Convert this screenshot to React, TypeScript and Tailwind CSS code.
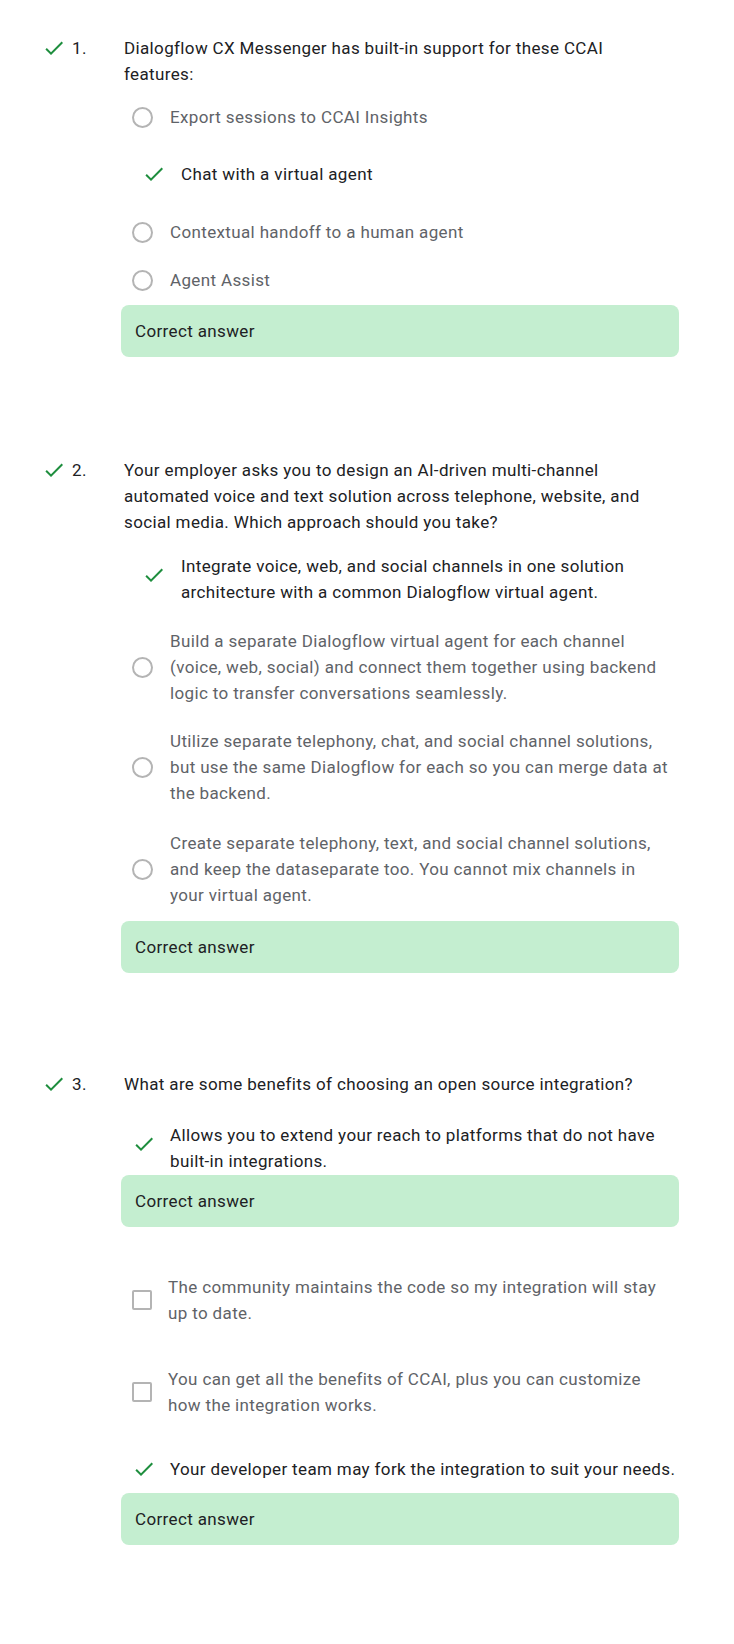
import React from "react";

type Kind = "radio" | "checkbox" | "picked" | "pickedTight";

type Option = {
  lines: string[];
  kind: Kind;
  mt: string;
  // green "Correct answer" box shown right after this option
  box?: string;
};

type Question = {
  num: number;
  mt: string;
  lines: string[];
  options: Option[];
  box?: string;
};

const CHECK_PATH = "M9 16.17L4.83 12l-1.42 1.41L9 19 21 7l-1.41-1.41z";

function CheckIcon({ className }: { className?: string }) {
  return (
    <svg viewBox="0 0 24 24" className={className} fill="#1e8e3e" aria-hidden="true">
      <path d={CHECK_PATH} />
    </svg>
  );
}

const questions: Question[] = [
  {
    num: 1,
    mt: "mt-0",
    lines: ["Dialogflow CX Messenger has built-in support for these CCAI", "features:"],
    options: [
      { lines: ["Export sessions to CCAI Insights"], kind: "radio", mt: "mt-[17px]" },
      { lines: ["Chat with a virtual agent"], kind: "picked", mt: "mt-[31px]" },
      { lines: ["Contextual handoff to a human agent"], kind: "radio", mt: "mt-[32px]" },
      { lines: ["Agent Assist"], kind: "radio", mt: "mt-[22px]" },
    ],
    box: "mt-[12px]",
  },
  {
    num: 2,
    mt: "mt-[100px]",
    lines: [
      "Your employer asks you to design an AI-driven multi-channel",
      "automated voice and text solution across telephone, website, and",
      "social media. Which approach should you take?",
    ],
    options: [
      {
        lines: [
          "Integrate voice, web, and social channels in one solution",
          "architecture with a common Dialogflow virtual agent.",
        ],
        kind: "picked",
        mt: "mt-[18px]",
      },
      {
        lines: [
          "Build a separate Dialogflow virtual agent for each channel",
          "(voice, web, social) and connect them together using backend",
          "logic to transfer conversations seamlessly.",
        ],
        kind: "radio",
        mt: "mt-[23px]",
      },
      {
        lines: [
          "Utilize separate telephony, chat, and social channel solutions,",
          "but use the same Dialogflow for each so you can merge data at",
          "the backend.",
        ],
        kind: "radio",
        mt: "mt-[22px]",
      },
      {
        lines: [
          "Create separate telephony, text, and social channel solutions,",
          "and keep the dataseparate too. You cannot mix channels in",
          "your virtual agent.",
        ],
        kind: "radio",
        mt: "mt-[24px]",
      },
    ],
    box: "mt-[13px]",
  },
  {
    num: 3,
    mt: "mt-[98px]",
    lines: ["What are some benefits of choosing an open source integration?"],
    options: [
      {
        lines: [
          "Allows you to extend your reach to platforms that do not have",
          "built-in integrations.",
        ],
        kind: "pickedTight",
        mt: "mt-[25px]",
        box: "mt-[1px]",
      },
      {
        lines: ["The community maintains the code so my integration will stay", "up to date."],
        kind: "checkbox",
        mt: "mt-[47px]",
      },
      {
        lines: ["You can get all the benefits of CCAI, plus you can customize", "how the integration works."],
        kind: "checkbox",
        mt: "mt-[40px]",
      },
      {
        lines: ["Your developer team may fork the integration to suit your needs."],
        kind: "pickedTight",
        mt: "mt-[38px]",
        box: "mt-[11px]",
      },
    ],
  },
];

function Lines({ lines, className }: { lines: string[]; className?: string }) {
  return (
    <div className={className}>
      {lines.map((l, i) => (
        <span key={i} className="block whitespace-nowrap">
          {l}
        </span>
      ))}
    </div>
  );
}

function CorrectBox({ mt }: { mt: string }) {
  return (
    <div className={`${mt} rounded-[8px] bg-[#c4eed0] px-[14px] py-[13px] text-[#202124]`}>
      Correct answer
    </div>
  );
}

function OptionRow({ opt }: { opt: Option }) {
  if (opt.kind === "radio") {
    return (
      <div className={`${opt.mt} flex items-center pl-[11px]`}>
        <span className="h-[21px] w-[21px] shrink-0 rounded-full border-2 border-[#b4b4b4]" />
        <Lines lines={opt.lines} className="ml-[17px] text-[#5f6368]" />
      </div>
    );
  }
  if (opt.kind === "checkbox") {
    return (
      <div className={`${opt.mt} flex items-center pl-[11px]`}>
        <span className="h-[20px] w-[20px] shrink-0 rounded-[2px] border-2 border-[#b4b4b4]" />
        <Lines lines={opt.lines} className="ml-[16px] text-[#5f6368]" />
      </div>
    );
  }
  const tight = opt.kind === "pickedTight";
  const multi = opt.lines.length > 1;
  return (
    <div className={`${opt.mt} flex items-center ${tight ? "pl-[11px]" : "pl-[21px]"}`}>
      <CheckIcon className={`h-6 w-6 shrink-0 ${multi ? "mb-2" : ""}`} />
      <Lines lines={opt.lines} className={`${tight ? "ml-[14px]" : "ml-[15px]"} text-[#202124]`} />
    </div>
  );
}

export default function App() {
  return (
    <div className="min-h-screen bg-white pt-[35px] pb-[99px] font-['Roboto',_'Noto_Sans',_sans-serif] text-[17px] leading-[26px] tracking-[0.36px] text-[#202124]">
      {questions.map((q) => (
        <section key={q.num} className={`${q.mt} flex pr-[55px]`}>
          <div className="flex w-[121px] shrink-0 items-start pl-[42px]">
            <div className="flex h-[26px] items-center">
              <CheckIcon className="h-6 w-6" />
            </div>
            <span className="ml-[6px]">{q.num}.</span>
          </div>
          <div className="min-w-0 flex-1">
            <Lines lines={q.lines} className="pl-[3px]" />
            {q.options.map((opt, i) => (
              <div key={i}>
                <OptionRow opt={opt} />
                {opt.box && <CorrectBox mt={opt.box} />}
              </div>
            ))}
            {q.box && <CorrectBox mt={q.box} />}
          </div>
        </section>
      ))}
    </div>
  );
}
